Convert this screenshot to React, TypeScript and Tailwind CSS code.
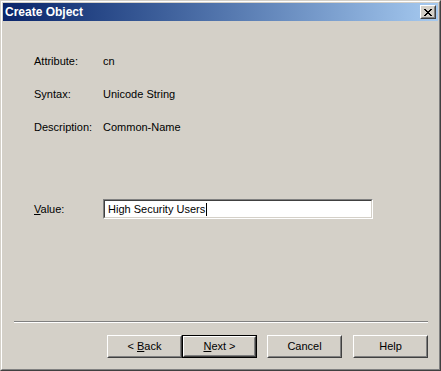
const font = { fontFamily: '"Liberation Sans", Arial, sans-serif' }

function WinButton({ children, isDefault = false }: { children: React.ReactNode; isDefault?: boolean }) {
  const face = (
    <div className="flex h-full w-full border border-t-white border-l-white border-b-[#404040] border-r-[#404040]">
      <div className="flex h-full w-full items-center justify-center border border-t-[#d4d0c8] border-l-[#d4d0c8] border-b-[#808080] border-r-[#808080] text-[11px] text-black">
        <span className="whitespace-pre">{children}</span>
      </div>
    </div>
  )
  if (isDefault) {
    return <div className="h-[23px] w-[75px] border border-black">{face}</div>
  }
  return <div className="h-[23px] w-[75px]">{face}</div>
}

export default function App() {
  return (
    <div className="h-[371px] w-[441px] bg-[#d4d0c8]" style={font}>
      <div className="h-full w-full border border-t-[#d4d0c8] border-l-[#d4d0c8] border-b-[#404040] border-r-[#404040]">
        <div className="flex h-full w-full flex-col border border-t-white border-l-white border-b-[#808080] border-r-[#808080] p-px">
          {/* title bar */}
          <div className="flex h-[18px] items-center justify-between bg-gradient-to-r from-[#0a246a] to-[#a6caf0] pl-[2px] pr-[2px]">
            <span className="text-[12px] font-bold leading-none text-white">Create Object</span>
            <div className="h-[14px] w-[16px] border border-t-white border-l-white border-b-[#404040] border-r-[#404040]">
              <div className="flex h-full w-full items-center justify-center border border-t-[#d4d0c8] border-l-[#d4d0c8] border-b-[#808080] border-r-[#808080] bg-[#d4d0c8]">
                <svg width="8" height="7" viewBox="0 0 8 7" shapeRendering="crispEdges">
                  <path d="M0 0h2v1H0zM6 0h2v1H6zM1 1h2v1H1zM5 1h2v1H5zM2 2h4v1H2zM3 3h2v1H3zM2 4h4v1H2zM1 5h2v1H1zM5 5h2v1H5zM0 6h2v1H0zM6 6h2v1H6z" fill="black" />
                </svg>
              </div>
            </div>
          </div>

          {/* body */}
          <div className="flex flex-1 flex-col text-[11px] text-black">
            <div className="flex flex-col gap-[20px] pl-[31px] pt-[34px]">
              <div className="flex h-[13px] items-center leading-[13px]">
                <span className="w-[69px]">Attribute:</span>
                <span>cn</span>
              </div>
              <div className="flex h-[13px] items-center leading-[13px]">
                <span className="w-[69px]">Syntax:</span>
                <span>Unicode String</span>
              </div>
              <div className="flex h-[13px] items-center leading-[13px]">
                <span className="w-[69px]">Description:</span>
                <span>Common-Name</span>
              </div>
            </div>

            <div className="mt-[65px] flex items-center pl-[31px]">
              <span className="w-[69px]">
                <span className="underline">V</span>alue:
              </span>
              <div className="h-[20px] w-[270px] border border-t-[#808080] border-l-[#808080] border-b-white border-r-white">
                <div className="flex h-full w-full items-center border border-t-[#404040] border-l-[#404040] border-b-[#d4d0c8] border-r-[#d4d0c8] bg-white pl-[3px]">
                  <span>High Security Users</span>
                  <span className="ml-px inline-block h-[13px] w-px bg-black" />
                </div>
              </div>
            </div>

            <div className="mt-[102px] ml-[11px] w-[414px] border-t border-b border-t-[#808080] border-b-white" />

            <div className="mt-[12px] flex pr-[10px] justify-end">
              <WinButton>
                {'< '}<span className="underline">B</span>ack
              </WinButton>
              <WinButton isDefault>
                <span className="underline">N</span>{'ext >'}
              </WinButton>
              <div className="ml-[10px]">
                <WinButton>Cancel</WinButton>
              </div>
              <div className="ml-[11px]">
                <WinButton>Help</WinButton>
              </div>
            </div>
          </div>
        </div>
      </div>
    </div>
  )
}
